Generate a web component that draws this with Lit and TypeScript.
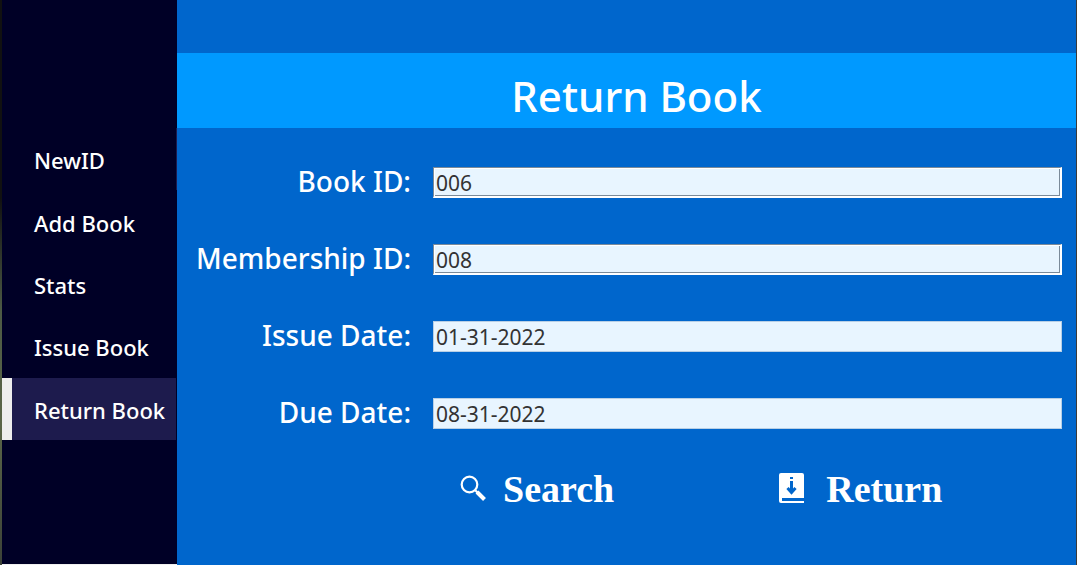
import { LitElement, html, css } from "lit";
import { customElement, state } from "lit/decorators.js";
import { classMap } from "lit/directives/class-map.js";

interface Field {
  id: string;
  label: string;
  value: string;
  etched: boolean;
}

@customElement("side-nav")
export class SideNav extends LitElement {
  static styles = css`
    :host {
      display: flex;
      flex-direction: column;
      box-sizing: border-box;
      padding-top: 128px;
      background: #000026;
      border-bottom: 1px solid #f0f0f0;
    }
    nav {
      display: grid;
      grid-auto-rows: 1fr;
      min-height: 312px;
    }
    .item {
      display: flex;
      align-items: center;
      box-sizing: border-box;
      padding: 2px 0 0 22px;
      border: solid #000026;
      border-width: 0 1px 0 10px;
      color: #fff;
      font: 500 22px/30px "Noto Sans", "Open Sans", sans-serif;
      text-decoration: none;
      white-space: nowrap;
    }
    .item:first-child {
      border-right-color: #1d1b4d;
    }
    .active {
      background: #1d1b4d;
      border-left-color: #eee;
    }
  `;

  @state() private current = "Return Book";

  private items = ["NewID", "Add Book", "Stats", "Issue Book", "Return Book"];

  render() {
    return html`<nav>
      ${this.items.map(
        (item) => html`<a
          href="#"
          class=${classMap({ item: true, active: item === this.current })}
          @click=${(e: Event) => {
            e.preventDefault();
            this.current = item;
          }}
          >${item}</a
        >`
      )}
    </nav>`;
  }
}

@customElement("return-form")
export class ReturnForm extends LitElement {
  static styles = css`
    :host {
      display: block;
      padding-top: 53px;
      background: #0066cc;
      color: #fff;
      font-family: "Noto Sans", "Open Sans", sans-serif;
    }
    h1 {
      margin: 0;
      box-sizing: border-box;
      height: 75px;
      padding: 8px 0 0 20px;
      background: #0099ff;
      font-size: 42px;
      line-height: 70px;
      font-weight: 500;
      text-align: center;
    }
    form {
      padding: 39px 14px 0 16px;
    }
    .fields {
      display: grid;
      grid-template-columns: 218px 1fr;
      column-gap: 22px;
      row-gap: 46px;
    }
    label {
      font-size: 28px;
      line-height: 28px;
      font-weight: 500;
      text-align: right;
      white-space: nowrap;
    }
    input {
      box-sizing: border-box;
      width: 100%;
      height: 31px;
      margin: 0;
      padding: 1px 2px 0;
      border: 1px solid #b8cfe5;
      border-radius: 0;
      outline: none;
      background: #e8f5ff;
      color: #333;
      font: 21px/28px "Noto Sans", "Open Sans", sans-serif;
    }
    .etched {
      border-style: solid;
      border-width: 1px 2px 2px 1px;
      border-color: #7a8a99 #fff #fff #7a8a99;
      box-shadow: inset 1px 1px #fff, inset -1px -1px #7a8a99;
    }
    .actions {
      display: grid;
      grid-template-columns: 9fr 8fr;
      padding: 37px 0 0 266px;
    }
    button {
      display: flex;
      align-items: center;
      justify-self: start;
      gap: 16px;
      padding: 0;
      border: 0;
      background: none;
      color: #fff;
      font: bold 38px/46px "Liberation Serif", "Times New Roman", serif;
      cursor: pointer;
    }
    svg {
      display: block;
      width: 28px;
      height: 32px;
    }
    .book {
      width: 32px;
    }
  `;

  private fields: Field[] = [
    { id: "book", label: "Book ID:", value: "006", etched: true },
    { id: "member", label: "Membership ID:", value: "008", etched: true },
    { id: "issue", label: "Issue Date:", value: "01-31-2022", etched: false },
    { id: "due", label: "Due Date:", value: "08-31-2022", etched: false },
  ];

  render() {
    return html`
      <h1>Return Book</h1>
      <form @submit=${(e: Event) => e.preventDefault()}>
        <div class="fields">
          ${this.fields.map(
            (f) => html`<label for=${f.id}>${f.label}</label>
              <input
                id=${f.id}
                type="text"
                class=${classMap({ etched: f.etched })}
                .value=${f.value}
              />`
          )}
        </div>
        <div class="actions">
          <button type="submit">
            <svg viewBox="0 0 28 32" fill="none" stroke="#fff" aria-hidden="true">
              <circle cx="10.5" cy="11.500" r="7.8" stroke-width="2.2" />
              <path d="M16 17l3 3" stroke-width="2.2" />
              <path d="M18 19l7.5 7.5" stroke-width="4" />
            </svg>
            Search
          </button>
          <button type="button">
            <svg class="book" viewBox="0 1 32 32" aria-hidden="true">
              <path
                fill="#fff"
                d="M3 1h21a2 2 0 0 1 2 2v21H4v3h22v4H3a2 2 0 0 1-2-2V3a2 2 0 0 1 2-2z"
              />
              <path fill="#0066cc" d="M12 5h3v2h-3zM4 26h22v3H4z" />
              <path
                d="M13.5 9v12M9.5 16l4 4.500 4-4.500"
                fill="none"
                stroke="#0066cc"
                stroke-width="3"
              />
              <path fill="#fff" d="M4 24h22v2H4z" />
            </svg>
            Return
          </button>
        </div>
      </form>
    `;
  }
}

@customElement("app-root")
export class AppRoot extends LitElement {
  static styles = css`
    :host {
      display: grid;
      grid-template-columns: 2px 175px 1fr 1px;
      min-height: 100vh;
    }
    .edge-left {
      background: linear-gradient(#111 0 35%, #4d5a45 55%, #5a6548 75%, #3c4238);
    }
    .edge-right {
      background: #3a3a3a;
    }
  `;

  render() {
    return html`
      <div class="edge-left"></div>
      <side-nav></side-nav>
      <return-form></return-form>
      <div class="edge-right"></div>
    `;
  }
}
